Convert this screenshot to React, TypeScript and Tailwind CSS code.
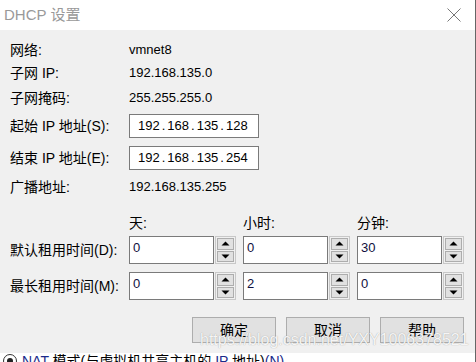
import React from "react";

const FONT = "font-['Liberation_Sans','Noto_Sans_CJK_SC',sans-serif]";

function IpBox({ parts }: { parts: string[] }) {
  return (
    <div className="flex h-[24px] w-[130px] items-center border border-[#7a7a7a] bg-white pl-[8px] text-[13px] text-black">
      {parts.map((p, i) => (
        <React.Fragment key={i}>
          {i > 0 && <span className="mx-[2px]">.</span>}
          <span>{p}</span>
        </React.Fragment>
      ))}
    </div>
  );
}

function Arrow({ up }: { up?: boolean }) {
  return (
    <div className="flex flex-1 items-center justify-center border border-[#adadad] bg-[#e1e1e1]">
      <svg width="9" height="5" viewBox="0 0 9 5">
        {up ? <path d="M0.5 4.5 L4.5 0.5 L8.5 4.5 Z" fill="#000" /> : <path d="M0.5 0.5 L4.5 4.5 L8.5 0.5 Z" fill="#000" />}
      </svg>
    </div>
  );
}

function Spin({ value }: { value: string }) {
  return (
    <div className="flex h-[28px] w-[107px] gap-[1px]">
      <div className="h-full w-[86px] border border-[#7a7a7a] bg-white pl-[3px] pt-[4px] text-[13px] leading-[14px] text-[#101040]">
        {value}
      </div>
      <div className="flex h-full w-[21px] flex-col gap-[1px] border border-[#c8c8c8] bg-[#f0f0f0] p-[1px]">
        <Arrow up />
        <Arrow />
      </div>
    </div>
  );
}

function Row({ label, children, className }: { label: string; children: React.ReactNode; className: string }) {
  return (
    <div className={`flex items-center ${className}`}>
      <div className="w-[119px] text-[14px] leading-none text-black">{label}</div>
      {children}
    </div>
  );
}

export default function App() {
  return (
    <div className={`relative flex h-[362px] w-[476px] flex-col overflow-hidden border-r border-[#666] bg-white ${FONT}`}>
      {/* Title bar */}
      <div className="flex h-[30px] shrink-0 items-center justify-between bg-white pl-[4px] pr-[14px]">
        <span className="text-[15px] text-[#999]">DHCP 设置</span>
        <svg width="14" height="14" viewBox="0 0 14 14">
          <path d="M0.5 0.5 L13.5 13.5 M13.5 0.5 L0.5 13.5" stroke="#777" strokeWidth="1" />
        </svg>
      </div>

      {/* Body */}
      <div className="flex h-[323px] shrink-0 flex-col bg-[#f0f0f0] pl-[10px] text-black">
        <Row label="网络:" className="mt-[9px] h-[22px]">
          <span className="text-[13px]">vmnet8</span>
        </Row>
        <Row label="子网 IP:" className="mt-[1px] h-[22px]">
          <span className="text-[13px]">192.168.135.0</span>
        </Row>
        <Row label="子网掩码:" className="mt-[3px] h-[22px]">
          <span className="text-[13px]">255.255.255.0</span>
        </Row>
        <Row label="起始 IP 地址(S):" className="mt-[5px] h-[24px]">
          <IpBox parts={["192", "168", "135", "128"]} />
        </Row>
        <Row label="结束 IP 地址(E):" className="mt-[8px] h-[24px]">
          <IpBox parts={["192", "168", "135", "254"]} />
        </Row>
        <Row label="广播地址:" className="mt-[6px] h-[22px]">
          <span className="text-[13px]">192.168.135.255</span>
        </Row>

        <div className="mt-[14px] grid grid-cols-[112px_107px_107px_107px] gap-x-[7px] text-[14px] leading-none">
          <div className="h-[22px]" />
          <div className="flex h-[22px] items-center">天:</div>
          <div className="flex h-[22px] items-center">小时:</div>
          <div className="flex h-[22px] items-center">分钟:</div>

          <div className="mt-[2px] flex items-center">默认租用时间(D):</div>
          <div className="mt-[2px]"><Spin value="0" /></div>
          <div className="mt-[2px]"><Spin value="0" /></div>
          <div className="mt-[2px]"><Spin value="30" /></div>

          <div className="mt-[8px] flex items-center">最长租用时间(M):</div>
          <div className="mt-[8px]"><Spin value="0" /></div>
          <div className="mt-[8px]"><Spin value="2" /></div>
          <div className="mt-[8px]"><Spin value="0" /></div>
        </div>

        <div className="mt-[17px] flex justify-end gap-[10px] pr-[11px]">
          {["确定", "取消", "帮助"].map((t) => (
            <button key={t} className="flex h-[26px] w-[84px] items-center justify-center border border-[#adadad] bg-[#e1e1e1] text-[14px] leading-none text-black">
              {t}
            </button>
          ))}
        </div>
      </div>

      {/* Window underneath, mostly hidden */}
      <div className="flex h-[9px] shrink-0 items-start gap-[5px] overflow-hidden bg-white pl-[3px] text-[14px] leading-[16px]">
        <div className="mt-[1px] flex h-[14px] w-[14px] items-center justify-center rounded-full border border-[#333]">
          <div className="h-[6px] w-[6px] rounded-full bg-[#222]" />
        </div>
        <span className="whitespace-nowrap">
          <span className="text-[#1a2a8a]">NAT</span> 模式(与虚拟机共享主机的 <span className="text-[#1a2a8a]">IP</span> 地址)<span className="text-[#1a2a8a]">(N)</span>
        </span>
      </div>

      {/* Watermark */}
      <div className="absolute left-[200px] top-[332px] whitespace-nowrap text-[16px] leading-[16px] text-white/90 [text-shadow:0_0_1px_rgba(110,110,110,0.7)]">
        https://blog.csdn.net/YXY1006378521
      </div>
    </div>
  );
}
